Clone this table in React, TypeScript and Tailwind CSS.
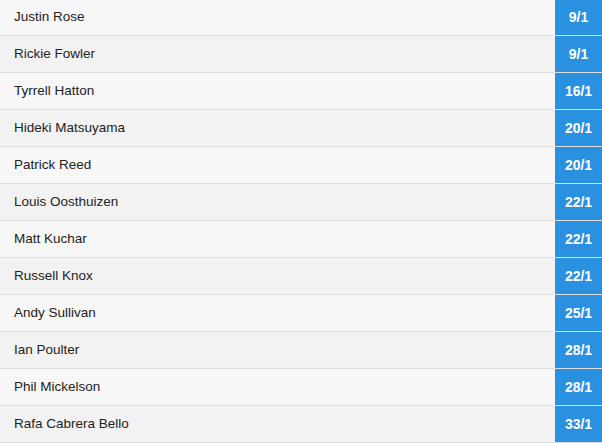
const rows: [string, string][] = [
  ["Justin Rose", "9/1"],
  ["Rickie Fowler", "9/1"],
  ["Tyrrell Hatton", "16/1"],
  ["Hideki Matsuyama", "20/1"],
  ["Patrick Reed", "20/1"],
  ["Louis Oosthuizen", "22/1"],
  ["Matt Kuchar", "22/1"],
  ["Russell Knox", "22/1"],
  ["Andy Sullivan", "25/1"],
  ["Ian Poulter", "28/1"],
  ["Phil Mickelson", "28/1"],
  ["Rafa Cabrera Bello", "33/1"],
];

export default function App() {
  return (
    <div className="w-[602px] h-[444px] overflow-hidden bg-white font-['Liberation_Sans',Arial,sans-serif]">
      <div className="-mt-px">
        {rows.map(([name, odds], i) => (
          <div
            key={name}
            className={`flex h-[37px] border-b border-[#dedede] ${i % 2 === 0 ? "bg-[#f7f7f7]" : "bg-[#f2f2f2]"}`}
          >
            <div className="flex-1 flex items-center pl-[14px] text-[13.5px] text-[#222]">{name}</div>
            <div className="w-[47px] flex items-center justify-center bg-[#2a90e0] text-white text-[14px] font-bold">
              {odds}
            </div>
          </div>
        ))}
      </div>
    </div>
  );
}
